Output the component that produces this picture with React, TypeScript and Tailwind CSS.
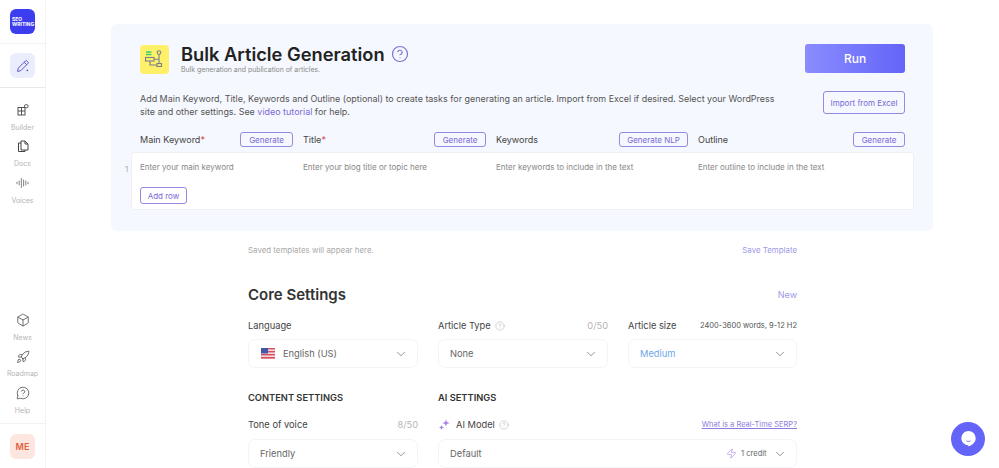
import React from 'react';
import { ChevronDown, CircleHelp, Box, Rocket, MessageCircleQuestion, Zap } from 'lucide-react';

const font = { fontFamily: 'Inter, sans-serif' };

const NavItem = ({ icon, label }: { icon: React.ReactNode; label: string }) => (
  <div className="flex h-[36.5px] flex-col items-center">
    <div className="flex h-[15px] items-center justify-center text-[#444]">{icon}</div>
    <span className="mt-[4px] text-[7px] leading-[12px] text-[#b5b5b5]">{label}</span>
  </div>
);

const OutlineButton = ({ children, className = '' }: { children: React.ReactNode; className?: string }) => (
  <button className={`flex items-center justify-center rounded-[3px] border border-[#9788e4] text-[#7a68d8] ${className}`}>
    {children}
  </button>
);

const Select = ({ children, right, className = '' }: { children: React.ReactNode; right?: React.ReactNode; className?: string }) => (
  <div className={`flex h-[29px] items-center justify-between rounded-[7px] border border-[#f3f4f7] bg-white pl-[11px] pr-[9px] text-[9.3px] text-[#666] ${className}`}>
    <div className="flex items-center">{children}</div>
    <div className="flex items-center gap-[5px]">
      {right}
      <ChevronDown size={14} strokeWidth={1.2} className="text-[#666]" />
    </div>
  </div>
);

const Hint = () => <CircleHelp size={10} strokeWidth={1.2} className="text-[#aaa]" />;

const Flag = () => (
  <svg width="14" height="11" viewBox="0 0 14 11" className="ml-[1px] mr-[8px]">
    <rect width="14" height="11" fill="#f0d8dc" />
    <rect y="0" width="14" height="1.4" fill="#d8505f" />
    <rect y="3" width="14" height="1.4" fill="#d8505f" />
    <rect y="6" width="14" height="1.4" fill="#d8505f" />
    <rect y="9" width="14" height="1.6" fill="#d8505f" />
    <rect width="7" height="5.5" fill="#4456a8" />
  </svg>
);

const ArticleIcon = () => (
  <div className="flex h-[29px] w-[29px] items-center justify-center rounded-[4px] bg-[#fff06a]">
    <svg width="21" height="20" viewBox="0 0 21 20" fill="none" stroke="#77808e" strokeWidth="1.1">
      <path d="M2 3h5.500M2 5.500h5.500" stroke="#35d070" strokeWidth="1.300" />
      <rect x="1.500" y="8.500" width="8.500" height="3.500" />
      <circle cx="15" cy="3.500" r="1.800" />
      <path d="M15 5.300v5M10 10.300h5M15 10.300v4.200M6 12v4h7" />
      <rect x="13" y="14.500" width="4.500" height="3" />
    </svg>
  </div>
);

const cols = 'grid grid-cols-[153px_183px_192px_207px] gap-x-[10px]';
const fieldLabel = 'mb-[7px] flex h-[12px] items-center justify-between text-[9.3px] text-[#444]';

export default function App() {
  return (
    <div className="flex h-[468px] w-[999px] overflow-hidden bg-white" style={font}>
      <aside className="flex w-[46px] shrink-0 flex-col border-r border-[#f3f3f5]">
        <div className="flex h-[44px] shrink-0 justify-center border-b border-[#f2f2f2] pt-[9px]">
          <div className="flex h-[25px] w-[25px] items-center rounded-[6px] bg-[#3d3df0] pl-[2px] text-[5px] font-bold leading-[5px] text-white">
            <span>SEO<br />WRITING</span>
          </div>
        </div>
        <div className="flex h-[44px] shrink-0 justify-center border-b border-[#e8e8ea] pt-[9px]">
          <div className="flex h-[25px] w-[25px] items-center justify-center rounded-[6px] bg-[#eaedfc]">
            <svg width="14" height="14" viewBox="0 0 13 13" fill="none" stroke="#5a4fc8" strokeWidth="0.9">
              <path d="M1.500 11.500l.6-3L8.600 2a1.200 1.200 0 0 1 1.800 0l.5.5a1.200 1.200 0 0 1 0 1.800L4.500 10.800z" />
              <path d="M7.600 3l2.400 2.400" />
              <circle cx="10.500" cy="10.500" r="0.800" fill="#5a4fc8" stroke="none" />
            </svg>
          </div>
        </div>
        <nav className="pt-[14.5px]">
          <NavItem
            label="Builder"
            icon={
              <svg width="12" height="12" viewBox="0 0 12 12" fill="none" stroke="#444" strokeWidth="0.9">
                <rect x="1" y="3.500" width="7" height="7.500" />
                <path d="M1 7h7M4.500 3.500V11" />
                <rect x="7.500" y="0.700" width="3.500" height="3" rx="1.200" />
              </svg>
            }
          />
          <NavItem
            label="Docs"
            icon={
              <svg width="12" height="13" viewBox="0 0 12 13" fill="none" stroke="#444" strokeWidth="1">
                <path d="M4 1h4l3 3v6H4z" />
                <path d="M8 1v3h3M4 3H1.500v8.500H8V10" />
              </svg>
            }
          />
          <NavItem
            label="Voices"
            icon={
              <svg width="13" height="12" viewBox="0 0 13 12" fill="none" stroke="#666" strokeWidth="0.8" strokeLinecap="round">
                <path d="M1 5.200v1.600M3.200 4v4M5.400 1.500v9M7.600 3v6M9.800 4v4M12 5.200v1.600" />
              </svg>
            }
          />
        </nav>
        <nav className="mb-[1px] mt-auto">
          <NavItem label="News" icon={<Box size={14} strokeWidth={1.3} />} />
          <NavItem label="Roadmap" icon={<Rocket size={14} strokeWidth={1.3} />} />
          <NavItem label="Help" icon={<MessageCircleQuestion size={14} strokeWidth={1.3} />} />
        </nav>
        <div className="flex h-[45px] shrink-0 justify-center border-t border-[#f2f2f2] pt-[10px]">
          <div className="flex h-[25px] w-[25px] items-center justify-center rounded-[6px] bg-[#fde6df] text-[9px] font-semibold text-[#e2603a]">
            ME
          </div>
        </div>
      </aside>

      <main className="min-w-0 flex-1 pl-[65px] pr-[66px] pt-[24px]">
        <section className="h-[207px] w-[822px] rounded-[6px] bg-[#f5f8fe] pl-[29px] pt-[20px]">
          <div className="flex items-start justify-between pr-[28px]">
            <div className="flex items-center gap-[12px]">
              <ArticleIcon />
              <div>
                <div className="mb-[2px] flex items-center gap-[6px]">
                  <h1 className="text-[18.3px] font-semibold leading-[20px] text-[#222]">Bulk Article Generation</h1>
                  <CircleHelp size={18} strokeWidth={1.6} className="text-[#7a74d8]" />
                </div>
                <p className="text-[6.9px] leading-[8px] text-[#888]">Bulk generation and publication of articles.</p>
              </div>
            </div>
            <button className="flex h-[29px] w-[100px] items-center justify-center rounded-[3px] bg-gradient-to-r from-[#8a8cff] to-[#6464f8] text-[12px] font-medium text-white">
              Run
            </button>
          </div>

          <div className="mt-[17px] flex items-start justify-between pr-[28px]">
            <p className="mt-[0.5px] w-[650px] text-[8.95px] leading-[13px] text-[#555]">
              Add Main Keyword, Title, Keywords and Outline (optional) to create tasks for generating an article. Import from Excel if desired. Select your WordPress site and other settings. See{' '}
              <a className="text-[#7a68d8]">video tutorial</a> for help.
            </p>
            <OutlineButton className="h-[23px] w-[82px] text-[8px]">Import from Excel</OutlineButton>
          </div>

          <div className={`${cols} mt-[14.5px] items-center`}>
            <div className="flex items-center justify-between">
              <span className="text-[9px] text-[#444]">Main Keyword<span className="text-[#d83a3a]">*</span></span>
              <OutlineButton className="h-[15px] w-[53px] text-[8px]">Generate</OutlineButton>
            </div>
            <div className="flex items-center justify-between">
              <span className="text-[9px] text-[#444]">Title<span className="text-[#d83a3a]">*</span></span>
              <OutlineButton className="h-[15px] w-[52px] text-[8px]">Generate</OutlineButton>
            </div>
            <div className="flex items-center justify-between">
              <span className="text-[9px] text-[#444]">Keywords</span>
              <OutlineButton className="h-[15px] w-[69px] text-[8px]">Generate NLP</OutlineButton>
            </div>
            <div className="flex items-center justify-between">
              <span className="text-[9px] text-[#444]">Outline</span>
              <OutlineButton className="h-[15px] w-[52px] text-[8px]">Generate</OutlineButton>
            </div>
          </div>

          <div className="relative -ml-[9px] mt-[5px] h-[58px] w-[783px] rounded-[3px] border border-[#eef0f5] bg-white pl-[8px] pt-[9px]">
            <span className="absolute -left-[7px] top-[10px] text-[8px] text-[#aaa]">1</span>
            <div className={`${cols} text-[8px] leading-[10px] text-[#888]`}>
              <span>Enter your main keyword</span>
              <span>Enter your blog title or topic here</span>
              <span>Enter keywords to include in the text</span>
              <span>Enter outline to include in the text</span>
            </div>
            <OutlineButton className="mt-[15px] h-[17px] w-[47px] text-[8px]">Add row</OutlineButton>
          </div>
        </section>

        <div className="ml-[137px] w-[549px]">
          <div className="mt-[14px] flex items-center justify-between text-[7.9px] leading-[10px]">
            <span className="text-[#aaa]">Saved templates will appear here.</span>
            <span className="text-[#9d9ae8]">Save Template</span>
          </div>

          <div className="mt-[30px] flex items-center justify-between">
            <h2 className="text-[15px] font-semibold leading-[20px] text-[#333]">Core Settings</h2>
            <span className="text-[9px] text-[#9d9ae8]">New</span>
          </div>

          <div className="mt-[15px] grid grid-cols-[170px_170px_169px] gap-x-[20px]">
            <div>
              <div className={fieldLabel}>Language</div>
              <Select><Flag />English (US)</Select>
            </div>
            <div>
              <div className={fieldLabel}>
                <span className="flex items-center gap-[4px]">Article Type <Hint /></span>
                <span className="text-[#b5b5b5]">0/50</span>
              </div>
              <Select>None</Select>
            </div>
            <div>
              <div className={fieldLabel}>
                <span>Article size</span>
                <span className="text-[7.5px] text-[#555]">2400-3600 words, 9-12 H2</span>
              </div>
              <Select className="!text-[#6ea8e8]">Medium</Select>
            </div>
          </div>

          <div className="mt-[24px] grid grid-cols-[170px_359px] gap-x-[20px]">
            <div>
              <h3 className="text-[9.3px] font-semibold leading-[12px] text-[#333]">CONTENT SETTINGS</h3>
              <div className="mb-[8px] mt-[15px] flex h-[12px] items-center justify-between text-[9.3px] text-[#444]">
                <span>Tone of voice</span>
                <span className="text-[#b5b5b5]">8/50</span>
              </div>
              <Select>Friendly</Select>
            </div>
            <div>
              <h3 className="text-[9.3px] font-semibold leading-[12px] text-[#333]">AI SETTINGS</h3>
              <div className="mb-[8px] mt-[15px] flex h-[12px] items-center justify-between text-[9.3px] text-[#444]">
                <span className="flex items-center gap-[4px]">
                  <svg width="12" height="12" viewBox="0 0 12 12" className="mr-[2px] text-[#a77de8]" fill="currentColor">
                    <path d="M8 0.500l.9 2.600 2.600.9-2.600.9L8 7.500l-.9-2.600L4.500 4l2.600-.9zM3.500 6l.7 1.800L6 8.500l-1.800.7L3.500 11l-.7-1.800L1 8.500l1.800-.7z" />
                  </svg>
                  AI Model <Hint />
                </span>
                <a className="text-[7.5px] text-[#8d7ce0] underline">What is a Real-Time SERP?</a>
              </div>
              <Select right={<span className="mr-[1.5px] flex items-center gap-[4px] text-[7.5px] text-[#666]"><Zap size={11} strokeWidth={1.3} className="text-[#a77de8]" />1 credit</span>}>
                Default
              </Select>
            </div>
          </div>
        </div>
      </main>

      <button className="absolute left-[951px] top-[422px] flex h-[34px] w-[34px] items-center justify-center rounded-full bg-[#6464f8]">
        <svg width="17" height="18" viewBox="0 0 17 18">
          <path d="M8.500 1a7.200 7.200 0 0 1 7.200 7.200c0 4.300-3.700 6.800-7.200 8.300v-1.100A7.200 7.200 0 0 1 8.500 1z" fill="#fff" />
          <path d="M6.500 11c1.300.5 2.700.5 4 0" stroke="#6464f8" strokeWidth="1" fill="none" />
        </svg>
      </button>
    </div>
  );
}
